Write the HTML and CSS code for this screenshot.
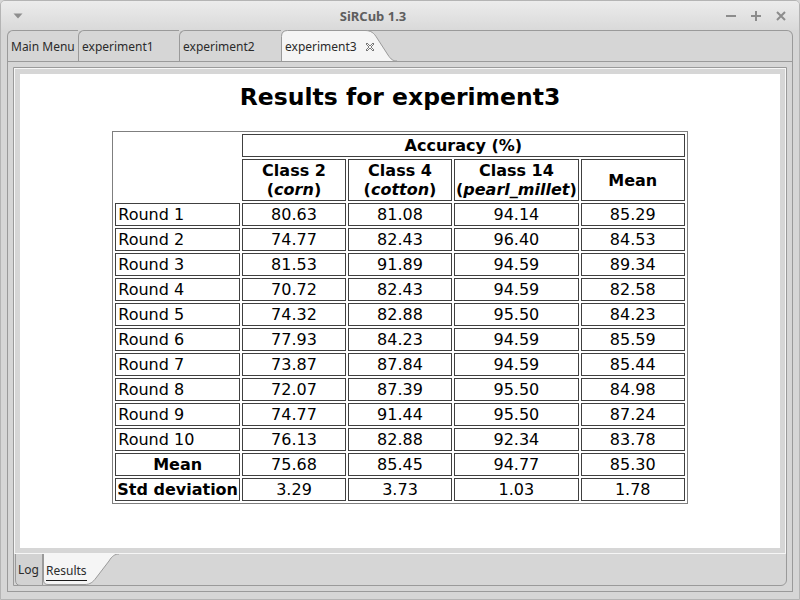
FILE: index.html
```html
<!DOCTYPE html>
<html>
<head>
<meta charset="utf-8">
<link rel="stylesheet" href="styles.css">
</head>
<body>
<div class="window">
  <div class="titlebar">
    <div class="menu-btn">
      <svg width="10" height="6" viewBox="0 0 10 6"><path d="M0.5 0.5 H9.5 L5 5.5 Z" fill="#8e8e8e"/></svg>
    </div>
    <div class="title">SiRCub 1.3</div>
    <div class="controls">
      <svg width="10" height="10" viewBox="0 0 10 10"><path d="M0 5 H10" stroke="#8c8c8c" stroke-width="2"/></svg>
      <svg width="10" height="10" viewBox="0 0 10 10"><path d="M0 5 H10 M5 0 V10" stroke="#8c8c8c" stroke-width="2"/></svg>
      <svg width="10" height="10" viewBox="0 0 10 10"><path d="M1 1 L9 9 M9 1 L1 9" stroke="#8c8c8c" stroke-width="2"/></svg>
    </div>
  </div>
  <div class="frame">
    <div class="tabpane">
      <div class="tabstrip">
        <div class="tab t0">Main Menu</div>
        <div class="tab t1">experiment1</div>
        <div class="tab t2">experiment2</div>
        <div class="tab-sel">
          <svg class="tab-bg" width="116" height="32" viewBox="0 0 116 32">
            <rect x="0" y="0" width="116" height="32" fill="#d6d6d6"/>
            <path d="M80 0.5 H116" stroke="#9a9a9a"/>
            <path d="M0.5 32 V6.5 Q0.5 0.5 6.5 0.5 H84 C90 0.5 93 3 96 8 L107 25 C110 29.5 112 31 116 31 V32 Z" fill="#f5f5f5"/>
            <path d="M0.5 32 V6.5 Q0.5 0.5 6.5 0.5 H84 C90 0.5 93 3 96 8 L107 25 C110 29.5 112 31 116 31" fill="none" stroke="#9a9a9a"/>
            <path d="M0 31.5 H116" stroke="#9a9a9a"/>
          </svg>
          <span class="tab-label">experiment3</span>
          <svg class="close" width="10" height="10" viewBox="0 0 10 10"><path d="M1 2 L2 1 L5 4 L8 1 L9 2 L6 5 L9 8 L8 9 L5 6 L2 9 L1 8 L4 5 Z" fill="#fbfbfb" stroke="#6a6a6a" stroke-width="0.9" stroke-linejoin="miter"/></svg>
        </div>
        <div class="strip-rest"></div>
      </div>
      <div class="pane-body">
        <div class="inner">
          <div class="panel">
            <div class="page">
              <h1 class="heading">Results for experiment3</h1>
              <table class="results">
                <colgroup>
                  <col class="c1"><col class="c2"><col class="c3"><col class="c4"><col class="c5">
                </colgroup>
                <tr>
                  <td class="blank" rowspan="2"></td>
                  <th colspan="4">Accuracy (%)</th>
                </tr>
                <tr>
                  <th>Class 2<br>(<i>corn</i>)</th>
                  <th>Class 4<br>(<i>cotton</i>)</th>
                  <th>Class 14<br>(<i>pearl_millet</i>)</th>
                  <th>Mean</th>
                </tr>
                <tr><td class="lbl">Round 1</td><td>80.63</td><td>81.08</td><td>94.14</td><td>85.29</td></tr>
                <tr><td class="lbl">Round 2</td><td>74.77</td><td>82.43</td><td>96.40</td><td>84.53</td></tr>
                <tr><td class="lbl">Round 3</td><td>81.53</td><td>91.89</td><td>94.59</td><td>89.34</td></tr>
                <tr><td class="lbl">Round 4</td><td>70.72</td><td>82.43</td><td>94.59</td><td>82.58</td></tr>
                <tr><td class="lbl">Round 5</td><td>74.32</td><td>82.88</td><td>95.50</td><td>84.23</td></tr>
                <tr><td class="lbl">Round 6</td><td>77.93</td><td>84.23</td><td>94.59</td><td>85.59</td></tr>
                <tr><td class="lbl">Round 7</td><td>73.87</td><td>87.84</td><td>94.59</td><td>85.44</td></tr>
                <tr><td class="lbl">Round 8</td><td>72.07</td><td>87.39</td><td>95.50</td><td>84.98</td></tr>
                <tr><td class="lbl">Round 9</td><td>74.77</td><td>91.44</td><td>95.50</td><td>87.24</td></tr>
                <tr><td class="lbl">Round 10</td><td>76.13</td><td>82.88</td><td>92.34</td><td>83.78</td></tr>
                <tr><th>Mean</th><td>75.68</td><td>85.45</td><td>94.77</td><td>85.30</td></tr>
                <tr><th>Std deviation</th><td>3.29</td><td>3.73</td><td>1.03</td><td>1.78</td></tr>
              </table>
            </div>
          </div>
          <div class="bottomstrip">
            <div class="btab log">
              <svg class="tab-bg" width="28" height="32" viewBox="0 0 28 32">
                <path d="M0.5 0 V26 Q0.5 31.5 6 31.5 H27.5 V0" fill="#d2d2d2" stroke="#9a9a9a"/>
              </svg>
              <span class="tab-label">Log</span>
            </div>
            <div class="btab results-tab">
              <svg class="tab-bg" width="76" height="32" viewBox="0 0 76 32">
                <path d="M0.5 0 V26 Q0.5 30.5 5 30.5 H42 C47 30.5 50 28 53 24 L66 7 C69 2 72 0 76 0 Z" fill="#f5f5f5"/>
                <path d="M0.5 0 V26 Q0.5 30.5 5 30.5 H42 C47 30.5 50 28 53 24 L66 7 C69 2 72 0 76 0" fill="none" stroke="#9a9a9a"/>
              </svg>
              <span class="tab-label focus">Results</span>
            </div>
          </div>
        </div>
      </div>
    </div>
  </div>
</div>
</body>
</html>
```
FILE: styles.css
```css
* { box-sizing: border-box; }
html, body { margin: 0; padding: 0; }
body {
  width: 800px;
  height: 600px;
  overflow: hidden;
  background: #d6d6d6;
  font-family: "Noto Sans", sans-serif;
}
.window {
  width: 800px;
  height: 600px;
  border: 1px solid #b4b4b4;
  border-radius: 5px 5px 0 0;
  background: #d6d6d6;
  display: flex;
  flex-direction: column;
}
.titlebar {
  height: 29px;
  flex: none;
  display: flex;
  align-items: center;
  background: linear-gradient(#ececec, #d9d9d9);
  border-radius: 4px 4px 0 0;
}
.menu-btn {
  width: 39px;
  padding-left: 12px;
  display: flex;
  align-items: center;
}
.title {
  flex: 1;
  text-align: center;
  font-weight: bold;
  font-size: 13px;
  color: #5e5e5e;
}
.controls {
  width: 93px;
  padding-left: 20px;
  display: flex;
  gap: 15px;
  align-items: center;
}
.controls svg { display: block; }
.frame {
  flex: 1;
  padding: 0 6px 7px 6px;
  display: flex;
}
.tabpane {
  flex: 1;
  display: flex;
  flex-direction: column;
}
.tabstrip {
  height: 32px;
  flex: none;
  display: flex;
}
.tab {
  height: 32px;
  border-top: 1px solid #9a9a9a;
  border-left: 1px solid #9a9a9a;
  border-bottom: 1px solid #9a9a9a;
  border-top-left-radius: 6px;
  padding-left: 3px;
  padding-top: 1px;
  font-size: 12px;
  line-height: 30px;
  color: #2b2b2b;
  white-space: nowrap;
}
.t0 { width: 71px; }
.t1 { width: 101px; }
.t2 { width: 102px; }
.tab-sel {
  position: relative;
  width: 116px;
  height: 32px;
  padding-left: 4px;
  padding-top: 2px;
  display: flex;
  align-items: center;
  font-size: 12px;
  color: #2b2b2b;
}
.tab-bg {
  position: absolute;
  left: 0;
  top: 0;
  display: block;
}
.tab-label {
  position: relative;
  line-height: 16px;
}
.close {
  position: relative;
  margin-left: 8px;
  display: block;
}
.strip-rest {
  flex: 1;
  height: 32px;
  border-top: 1px solid #9a9a9a;
  border-right: 1px solid #9a9a9a;
  border-bottom: 1px solid #9a9a9a;
  border-top-right-radius: 6px;
}
.pane-body {
  flex: 1;
  border: 1px solid #9a9a9a;
  border-top: none;
  padding: 5px;
  display: flex;
}
.inner {
  flex: 1;
  border: 1px solid #9a9a9a;
  border-bottom-right-radius: 6px;
  display: flex;
  flex-direction: column;
}
.panel {
  flex: 1;
  border: 1px solid #f6f6f6;
  padding: 5px;
  background: #d6d6d6;
  display: flex;
}
.page {
  flex: 1;
  background: #ffffff;
  font-family: "DejaVu Sans", sans-serif;
  color: #000;
}
.heading {
  margin: 9px 0 20px 0;
  font-size: 23.5px;
  line-height: 28px;
  font-weight: bold;
  text-align: center;
}
.results {
  margin: 0 auto;
  table-layout: fixed;
  border-collapse: separate;
  border-spacing: 2px;
  border: 1px solid #7f7f7f;
  font-size: 16px;
  line-height: 19px;
}
.c1 { width: 122px; }
.c2 { width: 104px; }
.c3 { width: 104px; }
.c4 { width: 123px; }
.c5 { width: 104px; }
.results td, .results th {
  border: 1px solid #404040;
  padding: 1px 1px;
  text-align: center;
  vertical-align: middle;
  white-space: nowrap;
}
.results th { font-weight: bold; }
.results td.lbl { text-align: left; padding-left: 2px; }
.results td.blank { border: none; }
.bottomstrip {
  height: 31px;
  flex: none;
  display: flex;
  padding-left: 1px;
}
.btab {
  position: relative;
  height: 31px;
  font-size: 12px;
  color: #2b2b2b;
  display: flex;
  align-items: center;
}
.log { width: 28px; padding-left: 3px; padding-top: 1px; }
.results-tab { width: 76px; padding-left: 3px; }
.focus {
  border-bottom: 1px solid #1a1a1a;
  padding-bottom: 1px;
  margin-top: 4px;
}
```
